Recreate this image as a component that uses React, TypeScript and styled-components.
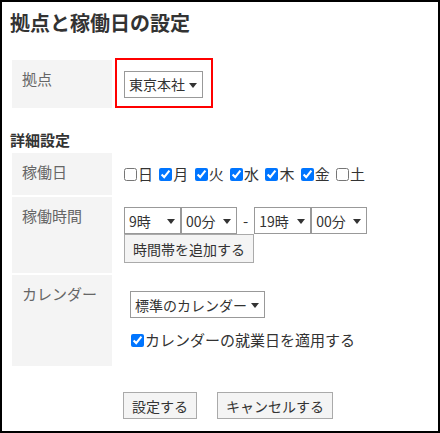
import React from "react";
import styled, { createGlobalStyle } from "styled-components";

const Global = createGlobalStyle`
  html, body { margin: 0; padding: 0; background: #fff; }
  body {
    font-family: "Noto Sans CJK JP", "Noto Sans", sans-serif;
    color: #333;
  }
  * { box-sizing: border-box; }
`;

const Frame = styled.div`
  width: 440px;
  height: 433px;
  border: 2px solid #000;
  padding: 8px;
  overflow: hidden;
`;

const Title = styled.h1`
  margin: 0;
  font-size: 20px;
  line-height: 26px;
  font-weight: 700;
  color: #333;
`;

const SiteGrid = styled.div`
  display: grid;
  grid-template-columns: 100px auto;
  column-gap: 2px;
  margin: 24px 0 0 2px;
`;

const DetailGrid = styled.div`
  display: grid;
  grid-template-columns: 100px auto;
  gap: 2px;
  margin: 3px 0 0 2px;
`;

const LabelCell = styled.div<{ $minH?: number }>`
  background: #f4f4f4;
  padding: 8px 10px;
  font-size: 15px;
  line-height: 22px;
  color: #666;
  min-height: ${(p) => (p.$minH ? `${p.$minH}px` : "auto")};
`;

const ValueCell = styled.div<{ $pad?: string }>`
  display: flex;
  flex-direction: column;
  align-items: flex-start;
  justify-content: center;
  padding: ${(p) => p.$pad ?? "10px"};
`;

const SectionHeading = styled.h2`
  margin: 22px 0 0 0;
  font-size: 15px;
  line-height: 20px;
  font-weight: 700;
  color: #333;
`;

const Highlight = styled.span`
  position: relative;
  display: inline-block;
`;

const RedMark = styled.span`
  position: absolute;
  top: -13px;
  left: -9px;
  right: -10px;
  bottom: -10px;
  border: 2px solid #ff0000;
  pointer-events: none;
`;

const SelectWrap = styled.span<{ $w: number }>`
  position: relative;
  display: inline-block;
  width: ${(p) => p.$w}px;
  height: 27px;
  flex: none;
  &::after {
    content: "";
    position: absolute;
    right: 6px;
    top: 12px;
    border-left: 4.5px solid transparent;
    border-right: 4.5px solid transparent;
    border-top: 5px solid #333;
    pointer-events: none;
  }
`;

const NativeSelect = styled.select`
  appearance: none;
  -webkit-appearance: none;
  display: block;
  width: 100%;
  height: 100%;
  margin: 0;
  border: 1px solid #999;
  border-radius: 0;
  background: #fff;
  font-family: inherit;
  font-size: 14px;
  color: #333;
  padding: 0 16px 0 4px;
  outline: none;
`;

const TimeLine = styled.div`
  display: flex;
  align-items: center;
`;

const Dash = styled.span`
  margin: 0 6px;
  font-size: 15px;
  color: #333;
`;

const Button = styled.button<{ $h?: number }>`
  height: ${(p) => p.$h ?? 27}px;
  padding: 0 8px;
  margin: 0;
  border: 1px solid #aaa;
  border-radius: 0;
  background: #f4f4f4;
  font-family: inherit;
  font-size: 14px;
  color: #333;
  white-space: nowrap;
`;

const DayGroup = styled.div`
  display: flex;
  align-items: center;
  gap: 6.33px;
`;

const CheckLabel = styled.label`
  display: inline-flex;
  align-items: center;
  font-size: 15px;
  line-height: 22px;
  color: #333;
  white-space: nowrap;
`;

const Check = styled.input`
  width: 13px;
  height: 13px;
  margin: 0 1px 0 0;
  flex: none;
`;

const CalendarCheck = styled(CheckLabel)`
  margin: 11px 0 0 1px;
`;

const ButtonRow = styled.div`
  display: flex;
  gap: 20px;
  margin: 26px 0 0 113px;
`;

type SelProps = { w: number; value: string; options: string[] };
const Select = ({ w, value, options }: SelProps) => (
  <SelectWrap $w={w}>
    <NativeSelect defaultValue={value}>
      {options.map((o) => (
        <option key={o} value={o}>
          {o}
        </option>
      ))}
    </NativeSelect>
  </SelectWrap>
);

const days: { d: string; on: boolean }[] = [
  { d: "日", on: false },
  { d: "月", on: true },
  { d: "火", on: true },
  { d: "水", on: true },
  { d: "木", on: true },
  { d: "金", on: true },
  { d: "土", on: false },
];

const hours = Array.from({ length: 24 }, (_, i) => `${i}時`);
const mins = ["00分", "15分", "30分", "45分"];

export default function App() {
  return (
    <>
      <Global />
      <Frame>
        <Title>拠点と稼働日の設定</Title>

        <SiteGrid>
          <LabelCell $minH={48}>拠点</LabelCell>
          <ValueCell $pad="10px">
            <Highlight>
              <Select w={79} value="東京本社" options={["東京本社", "大阪支社"]} />
              <RedMark />
            </Highlight>
          </ValueCell>
        </SiteGrid>

        <SectionHeading>詳細設定</SectionHeading>

        <DetailGrid>
          <LabelCell>稼働日</LabelCell>
          <ValueCell>
            <DayGroup>
              {days.map((x) => (
                <CheckLabel key={x.d}>
                  <Check type="checkbox" defaultChecked={x.on} />
                  {x.d}
                </CheckLabel>
              ))}
            </DayGroup>
          </ValueCell>

          <LabelCell>稼働時間</LabelCell>
          <ValueCell $pad="10px 10px 10px 10px">
            <TimeLine>
              <Select w={57} value="9時" options={hours} />
              <Select w={56} value="00分" options={mins} />
              <Dash>-</Dash>
              <Select w={57} value="19時" options={hours} />
              <Select w={56} value="00分" options={mins} />
            </TimeLine>
            <Button $h={29}>時間帯を追加する</Button>
          </ValueCell>

          <LabelCell>カレンダー</LabelCell>
          <ValueCell $pad="16px 10px 15px 16px">
            <Select w={135} value="標準のカレンダー" options={["標準のカレンダー"]} />
            <CalendarCheck>
              <Check type="checkbox" defaultChecked />
              カレンダーの就業日を適用する
            </CalendarCheck>
          </ValueCell>
        </DetailGrid>

        <ButtonRow>
          <Button>設定する</Button>
          <Button>キャンセルする</Button>
        </ButtonRow>
      </Frame>
    </>
  );
}
